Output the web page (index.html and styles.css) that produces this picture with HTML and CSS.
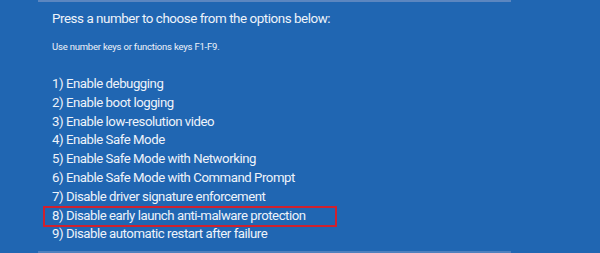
FILE: index.html
```html
<!DOCTYPE html>
<html>
<head>
<meta charset="utf-8">
<link rel="stylesheet" href="styles.css">
</head>
<body>
<div class="screen">
  <div class="panel">
    <h1 class="title">Press a number to choose from the options below:</h1>
    <p class="hint">Use number keys or functions keys F1-F9.</p>
    <ul class="options">
      <li>1) Enable debugging</li>
      <li>2) Enable boot logging</li>
      <li>3) Enable low-resolution video</li>
      <li>4) Enable Safe Mode</li>
      <li>5) Enable Safe Mode with Networking</li>
      <li>6) Enable Safe Mode with Command Prompt</li>
      <li>7) Disable driver signature enforcement</li>
      <li class="marked">8) Disable early launch anti-malware protection</li>
      <li>9) Disable automatic restart after failure</li>
    </ul>
  </div>
</div>
</body>
</html>
```
FILE: styles.css
```css
html, body {
  margin: 0;
  padding: 0;
  background: #2066b2;
}
.screen {
  width: 600px;
  height: 253px;
  overflow: hidden;
  background: #2066b2;
  font-family: Roboto, "Noto Sans", sans-serif;
  color: #eef3fa;
}
.panel {
  margin-left: 38px;
  width: 473px;
  height: 253px;
  border-top: 2px solid #5b86c0;
  border-bottom: 2px solid #4f80bd;
  padding-left: 14px;
  box-sizing: border-box;
}
.title {
  margin: 0;
  padding-top: 8px;
  font-size: 13.4px;
  font-weight: 400;
  letter-spacing: -0.45px;
  line-height: 18px;
}
.hint {
  margin: 0;
  padding-top: 13px;
  font-size: 9.5px;
  letter-spacing: -0.2px;
  line-height: 12px;
}
.options {
  list-style: none;
  margin: 0;
  padding: 22px 0 0 0;
}
.options li {
  font-size: 13.2px;
  letter-spacing: -0.45px;
  line-height: 18.8px;
  white-space: nowrap;
}
.options li.marked {
  position: relative;
}
.options li.marked::before {
  content: "";
  position: absolute;
  left: -9px;
  top: -1px;
  width: 290px;
  height: 17px;
  border: 2px solid #d0212e;
}
```
